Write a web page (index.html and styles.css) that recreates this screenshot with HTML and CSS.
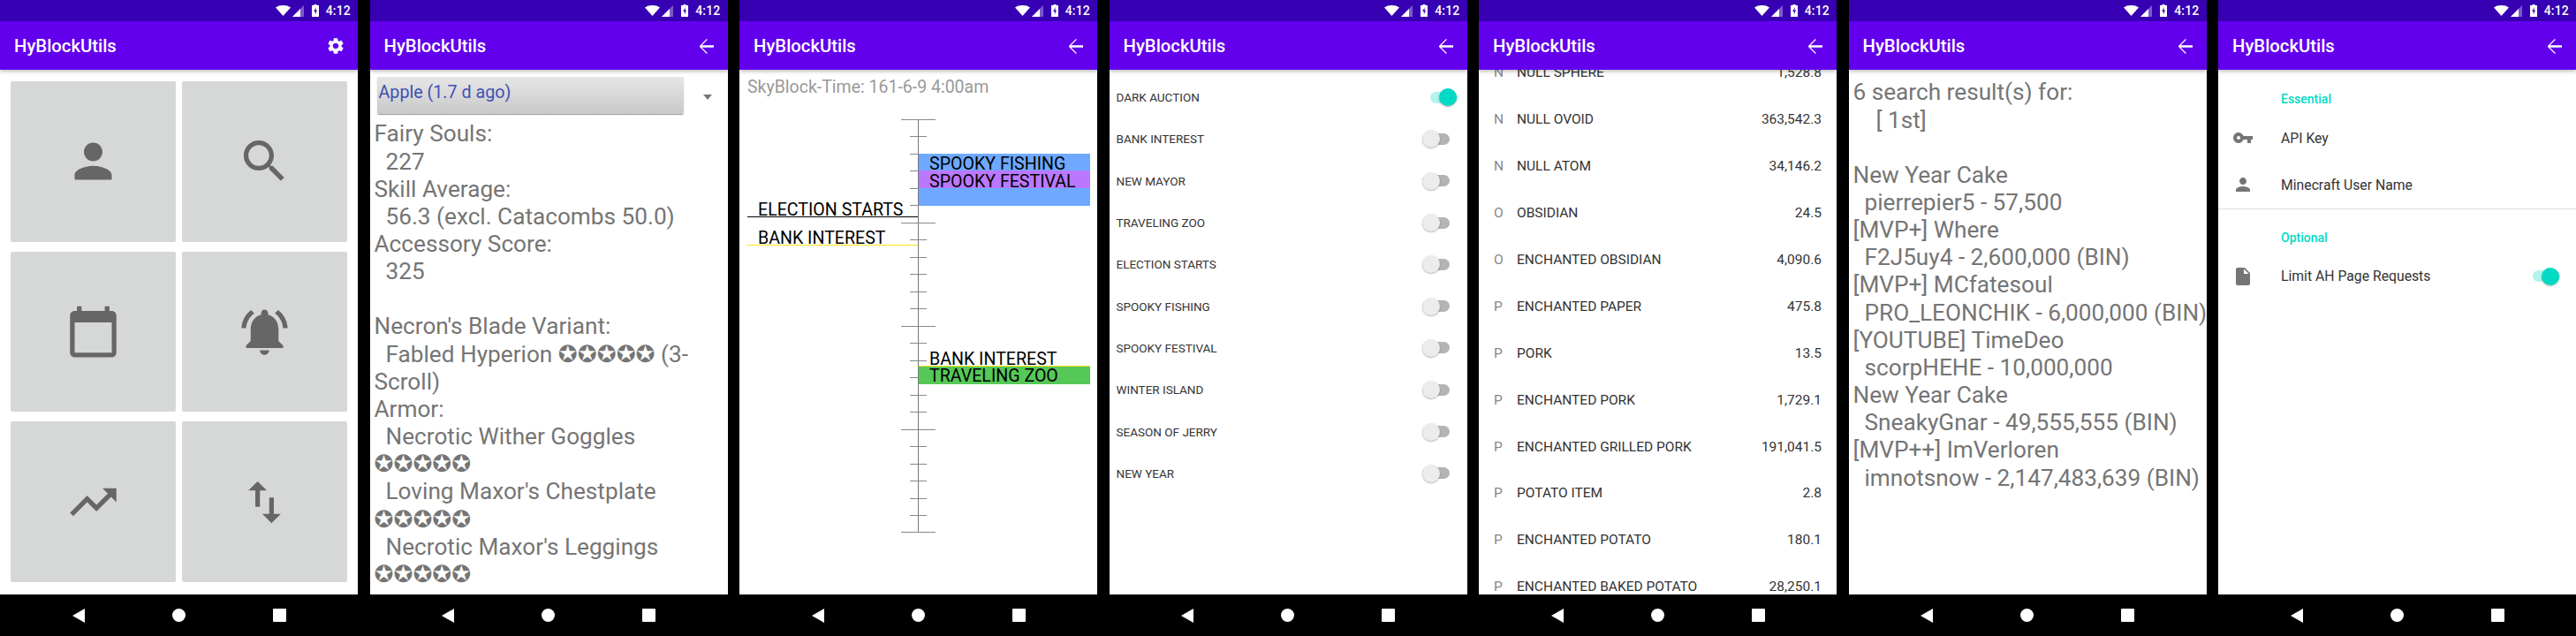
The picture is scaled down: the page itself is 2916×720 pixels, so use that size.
FILE: index.html
```html
<!DOCTYPE html>
<html lang="en">
<head>
    <meta charset="UTF-8">
    <title>HyBlockUtils</title>
    <link rel="stylesheet" href="styles.css">
</head>
<body>
    <svg class="icon-defs">
        <symbol id="wifi" viewBox="0 0 17 12"><path d="M8.5 12 0 2.5C2.2.8 5.2 0 8.5 0s6.300.8 8.500 2.500z"/></symbol>
        <symbol id="signal" viewBox="0 0 13 13"><path opacity=".35" d="M13 0v13H0z"/><path d="M9 4v9H0z"/></symbol>
        <symbol id="battery" viewBox="0 0 8 14"><path fill-rule="evenodd" d="M2.500 0h3v1H8v13H0V1h2.500zM4.700 3 2.300 8h1.500v3.500L6 6.500H4.400z"/></symbol>
        <symbol id="gear" viewBox="0 0 24 24"><path d="M19.140 12.940c.04-.3.06-.61.06-.94 0-.32-.02-.64-.07-.94l2.030-1.580c.18-.14.23-.41.12-.61l-1.920-3.320c-.12-.22-.37-.29-.59-.22l-2.390.96c-.5-.38-1.030-.7-1.620-.94l-.36-2.540c-.04-.24-.24-.41-.48-.41h-3.840c-.24 0-.43.17-.47.41l-.36 2.540c-.59.24-1.130.57-1.620.94l-2.390-.96c-.22-.08-.47 0-.59.22L2.740 8.870c-.12.21-.08.47.12.61l2.030 1.580c-.05.3-.09.63-.09.94s.02.64.07.94l-2.030 1.580c-.18.14-.23.41-.12.61l1.920 3.320c.12.22.37.29.59.22l2.390-.96c.5.38 1.030.7 1.620.94l.36 2.540c.05.24.24.41.48.41h3.840c.24 0 .44-.17.47-.41l.36-2.540c.59-.24 1.130-.56 1.620-.94l2.390.96c.22.08.47 0 .59-.22l1.920-3.320c.12-.22.07-.47-.12-.61l-2.010-1.580zM12 15.600c-1.980 0-3.600-1.620-3.600-3.600s1.620-3.600 3.600-3.600 3.600 1.620 3.600 3.600-1.620 3.600-3.600 3.600z"/></symbol>
        <symbol id="back" viewBox="0 0 24 24"><path d="M20 11.300H6.500l6.300-6.300-.8-1-8 8 .0 1 8 8 .8-1-6.300-6.300H20z"/></symbol>
        <symbol id="person" viewBox="0 0 24 24"><path d="M12 12c2.210 0 4-1.790 4-4s-1.790-4-4-4-4 1.790-4 4 1.790 4 4 4zm0 2c-2.670 0-8 1.340-8 4v2h16v-2c0-2.660-5.330-4-8-4z"/></symbol>
        <symbol id="search" viewBox="0 0 24 24"><path d="M15.500 14h-.79l-.28-.27C15.410 12.590 16 11.110 16 9.500 16 5.910 13.090 3 9.500 3S3 5.910 3 9.500 5.910 16 9.500 16c1.610 0 3.090-.59 4.230-1.570l.27.28v.79l5 4.990L20.490 19l-4.990-5zm-6 0C7.010 14 5 11.990 5 9.500S7.010 5 9.500 5 14 7.010 14 9.500 11.990 14 9.500 14z"/></symbol>
        <symbol id="calendar" viewBox="0 0 24 24"><path d="M20 3h-1V1h-2v2H7V1H5v2H4c-1.100 0-2 .9-2 2v16c0 1.100.9 2 2 2h16c1.100 0 2-.9 2-2V5c0-1.100-.9-2-2-2zm0 18H4V8h16v13z"/></symbol>
        <symbol id="alarm" viewBox="0 0 24 24"><path d="M7.580 4.080 6.150 2.650C3.750 4.480 2.170 7.300 2.030 10.500h2c.15-2.650 1.510-4.970 3.550-6.420zm12.390 6.420h2c-.15-3.200-1.730-6.020-4.120-7.850l-1.420 1.430c2.020 1.450 3.390 3.770 3.540 6.420zM18 11c0-3.070-1.640-5.640-4.500-6.320V4c0-.83-.67-1.500-1.500-1.500s-1.500.67-1.500 1.500v.68C7.630 5.360 6 7.920 6 11v5l-2 2v1h16v-1l-2-2v-5zm-6 11c.14 0 .27-.01.4-.04.65-.14 1.180-.58 1.440-1.180.1-.24.15-.5.15-.78h-4c.01 1.100.9 2 2.010 2z"/></symbol>
        <symbol id="trend" viewBox="0 0 24 24"><path d="m16 6 2.290 2.290-4.880 4.880-4-4L2 16.590 3.410 18l6-6 4 4 6.300-6.290L22 12V6z"/></symbol>
        <symbol id="swap" viewBox="0 0 24 24"><path d="M16 17.010V10h-2v7.010h-3L15 21l4-3.990h-3zM9 3 5 6.990h3V14h2V6.990h3L9 3z"/></symbol>
        <symbol id="key" viewBox="0 0 24 24"><path d="M12.650 10C11.830 7.670 9.610 6 7 6c-3.310 0-6 2.690-6 6s2.690 6 6 6c2.610 0 4.830-1.670 5.650-4H17v4h4v-4h2v-4H12.650zM7 14c-1.100 0-2-.9-2-2s.9-2 2-2 2 .9 2 2-.9 2-2 2z"/></symbol>
        <symbol id="file" viewBox="0 0 24 24"><path d="M6 2c-1.100 0-1.990.9-1.990 2L4 20c0 1.100.89 2 1.990 2H18c1.100 0 2-.9 2-2V8l-6-6H6zm7 7V3.500L18.500 9H13z"/></symbol>
    </svg>

    <main class="strip">
        <!-- home -->
        <section class="phone">
            <div class="status-bar"><svg class="st-wifi"><use href="#wifi"/></svg><svg class="st-signal"><use href="#signal"/></svg><svg class="st-battery"><use href="#battery"/></svg><span class="st-time">4:12</span></div>
            <header class="app-bar"><span class="app-title">HyBlockUtils</span><svg class="bar-icon gear-icon"><use href="#gear"/></svg></header>
            <div class="content tile-grid">
                <div class="tile"><svg class="tile-icon"><use href="#person"/></svg></div>
                <div class="tile"><svg class="tile-icon"><use href="#search"/></svg></div>
                <div class="tile"><svg class="tile-icon"><use href="#calendar"/></svg></div>
                <div class="tile"><svg class="tile-icon"><use href="#alarm"/></svg></div>
                <div class="tile"><svg class="tile-icon"><use href="#trend"/></svg></div>
                <div class="tile"><svg class="tile-icon"><use href="#swap"/></svg></div>
            </div>
            <nav class="nav-bar"><i class="nav-back"></i><i class="nav-home"></i><i class="nav-recent"></i></nav>
        </section>

        <!-- player stats -->
        <section class="phone">
            <div class="status-bar"><svg class="st-wifi"><use href="#wifi"/></svg><svg class="st-signal"><use href="#signal"/></svg><svg class="st-battery"><use href="#battery"/></svg><span class="st-time">4:12</span></div>
            <header class="app-bar"><span class="app-title">HyBlockUtils</span><svg class="bar-icon"><use href="#back"/></svg></header>
            <div class="content">
                <div class="spinner"><div class="spinner-button">Apple (1.7 d ago)</div><i class="spinner-arrow"></i></div>
                <div class="big-text">Fairy Souls:
  227
Skill Average:
  56.3 (excl. Catacombs 50.0)
Accessory Score:
  325

Necron's Blade Variant:
  Fabled Hyperion ✪✪✪✪✪ (3-Scroll)
Armor:
  Necrotic Wither Goggles ✪✪✪✪✪
  Loving Maxor's Chestplate ✪✪✪✪✪
  Necrotic Maxor's Leggings ✪✪✪✪✪</div>
            </div>
            <nav class="nav-bar"><i class="nav-back"></i><i class="nav-home"></i><i class="nav-recent"></i></nav>
        </section>

        <!-- event timeline -->
        <section class="phone">
            <div class="status-bar"><svg class="st-wifi"><use href="#wifi"/></svg><svg class="st-signal"><use href="#signal"/></svg><svg class="st-battery"><use href="#battery"/></svg><span class="st-time">4:12</span></div>
            <header class="app-bar"><span class="app-title">HyBlockUtils</span><svg class="bar-icon"><use href="#back"/></svg></header>
            <div class="content">
                <div class="sky-time">SkyBlock-Time: 161-6-9 4:00am</div>
                <div class="timeline">
                    <div class="axis-line"></div>
                    <div class="axis-minor"></div>
                    <div class="axis-major"></div>
                    <div class="band band-blue"></div>
                    <div class="band band-purple"></div>
                    <div class="band band-green"></div>
                    <div class="mark mark-left mark-black"></div>
                    <div class="mark mark-left mark-yellow"></div>
                    <div class="mark mark-right mark-yellow"></div>
                    <span class="ev ev-fishing">SPOOKY FISHING</span>
                    <span class="ev ev-festival">SPOOKY FESTIVAL</span>
                    <span class="ev ev-election">ELECTION STARTS</span>
                    <span class="ev ev-bank-l">BANK INTEREST</span>
                    <span class="ev ev-bank-r">BANK INTEREST</span>
                    <span class="ev ev-zoo">TRAVELING ZOO</span>
                </div>
            </div>
            <nav class="nav-bar"><i class="nav-back"></i><i class="nav-home"></i><i class="nav-recent"></i></nav>
        </section>

        <!-- notifications -->
        <section class="phone">
            <div class="status-bar"><svg class="st-wifi"><use href="#wifi"/></svg><svg class="st-signal"><use href="#signal"/></svg><svg class="st-battery"><use href="#battery"/></svg><span class="st-time">4:12</span></div>
            <header class="app-bar"><span class="app-title">HyBlockUtils</span><svg class="bar-icon"><use href="#back"/></svg></header>
            <div class="content switch-list">
                <div class="switch-row"><span>DARK AUCTION</span><i class="switch on"></i></div>
                <div class="switch-row"><span>BANK INTEREST</span><i class="switch"></i></div>
                <div class="switch-row"><span>NEW MAYOR</span><i class="switch"></i></div>
                <div class="switch-row"><span>TRAVELING ZOO</span><i class="switch"></i></div>
                <div class="switch-row"><span>ELECTION STARTS</span><i class="switch"></i></div>
                <div class="switch-row"><span>SPOOKY FISHING</span><i class="switch"></i></div>
                <div class="switch-row"><span>SPOOKY FESTIVAL</span><i class="switch"></i></div>
                <div class="switch-row"><span>WINTER ISLAND</span><i class="switch"></i></div>
                <div class="switch-row"><span>SEASON OF JERRY</span><i class="switch"></i></div>
                <div class="switch-row"><span>NEW YEAR</span><i class="switch"></i></div>
            </div>
            <nav class="nav-bar"><i class="nav-back"></i><i class="nav-home"></i><i class="nav-recent"></i></nav>
        </section>

        <!-- prices -->
        <section class="phone">
            <div class="status-bar"><svg class="st-wifi"><use href="#wifi"/></svg><svg class="st-signal"><use href="#signal"/></svg><svg class="st-battery"><use href="#battery"/></svg><span class="st-time">4:12</span></div>
            <header class="app-bar"><span class="app-title">HyBlockUtils</span><svg class="bar-icon"><use href="#back"/></svg></header>
            <div class="content">
                <div class="price-list">
                    <div class="price-row"><b>N</b><span>NULL SPHERE</span><em>1,528.8</em></div>
                    <div class="price-row"><b>N</b><span>NULL OVOID</span><em>363,542.3</em></div>
                    <div class="price-row"><b>N</b><span>NULL ATOM</span><em>34,146.2</em></div>
                    <div class="price-row"><b>O</b><span>OBSIDIAN</span><em>24.5</em></div>
                    <div class="price-row"><b>O</b><span>ENCHANTED OBSIDIAN</span><em>4,090.6</em></div>
                    <div class="price-row"><b>P</b><span>ENCHANTED PAPER</span><em>475.8</em></div>
                    <div class="price-row"><b>P</b><span>PORK</span><em>13.5</em></div>
                    <div class="price-row"><b>P</b><span>ENCHANTED PORK</span><em>1,729.1</em></div>
                    <div class="price-row"><b>P</b><span>ENCHANTED GRILLED PORK</span><em>191,041.5</em></div>
                    <div class="price-row"><b>P</b><span>POTATO ITEM</span><em>2.8</em></div>
                    <div class="price-row"><b>P</b><span>ENCHANTED POTATO</span><em>180.1</em></div>
                    <div class="price-row"><b>P</b><span>ENCHANTED BAKED POTATO</span><em>28,250.1</em></div>
                </div>
            </div>
            <nav class="nav-bar"><i class="nav-back"></i><i class="nav-home"></i><i class="nav-recent"></i></nav>
        </section>

        <!-- auction search -->
        <section class="phone">
            <div class="status-bar"><svg class="st-wifi"><use href="#wifi"/></svg><svg class="st-signal"><use href="#signal"/></svg><svg class="st-battery"><use href="#battery"/></svg><span class="st-time">4:12</span></div>
            <header class="app-bar"><span class="app-title">HyBlockUtils</span><svg class="bar-icon"><use href="#back"/></svg></header>
            <div class="content">
                <div class="big-text search-text">6 search result(s) for:
    [ 1st]

New Year Cake
  pierrepier5 - 57,500
[MVP+] Where
  F2J5uy4 - 2,600,000 (BIN)
[MVP+] MCfatesoul
  PRO_LEONCHIK - 6,000,000 (BIN)
[YOUTUBE] TimeDeo
  scorpHEHE - 10,000,000
New Year Cake
  SneakyGnar - 49,555,555 (BIN)
[MVP++] ImVerloren
  imnotsnow - 2,147,483,639 (BIN)</div>
            </div>
            <nav class="nav-bar"><i class="nav-back"></i><i class="nav-home"></i><i class="nav-recent"></i></nav>
        </section>

        <!-- settings -->
        <section class="phone">
            <div class="status-bar"><svg class="st-wifi"><use href="#wifi"/></svg><svg class="st-signal"><use href="#signal"/></svg><svg class="st-battery"><use href="#battery"/></svg><span class="st-time">4:12</span></div>
            <header class="app-bar"><span class="app-title">HyBlockUtils</span><svg class="bar-icon"><use href="#back"/></svg></header>
            <div class="content">
                <div class="pref-group">
                    <h3 class="pref-head">Essential</h3>
                    <div class="pref-row"><svg class="pref-icon"><use href="#key"/></svg><span>API Key</span></div>
                    <div class="pref-row"><svg class="pref-icon"><use href="#person"/></svg><span>Minecraft User Name</span></div>
                </div>
                <div class="pref-group">
                    <h3 class="pref-head">Optional</h3>
                    <div class="pref-row"><svg class="pref-icon"><use href="#file"/></svg><span>Limit AH Page Requests</span><i class="switch on pref-switch"></i></div>
                </div>
            </div>
            <nav class="nav-bar"><i class="nav-back"></i><i class="nav-home"></i><i class="nav-recent"></i></nav>
        </section>
    </main>
</body>
</html>
```
FILE: styles.css
```css
* { box-sizing: border-box; }
body {
    margin: 0;
    background-color: #000;
    font-family: Roboto, "DejaVu Sans", sans-serif;
}
.icon-defs { display: none; }
.strip {
    display: flex;
    justify-content: space-between;
    width: 2916px;
    height: 720px;
    overflow: hidden;
}
.phone {
    display: flex;
    flex-direction: column;
    width: 405px;
    height: 720px;
    background-color: #fff;
}

/* status bar */
.status-bar {
    display: flex;
    align-items: center;
    justify-content: flex-end;
    flex: none;
    height: 24px;
    padding-right: 8px;
    background-color: #3700b3;
    color: #fff;
    fill: #fff;
}
.st-wifi { width: 17px; height: 12px; margin-right: 2px; }
.st-signal { width: 13px; height: 13px; margin-right: 9px; }
.st-battery { width: 8px; height: 14px; margin-right: 8px; }
.st-time { font-size: 14px; font-weight: 500; letter-spacing: .2px; }

/* app bar */
.app-bar {
    position: relative;
    z-index: 2;
    display: flex;
    align-items: center;
    justify-content: space-between;
    flex: none;
    height: 55px;
    padding: 0 12px 0 16px;
    background-color: #6200ee;
    box-shadow: 0 2px 4px rgba(0, 0, 0, 0.25);
    color: #fff;
}
.app-title { font-size: 20.3px; font-weight: 500; }
.bar-icon { width: 24px; height: 24px; fill: #fff; }
.gear-icon { width: 22px; height: 22px; margin-right: 2px; }

.content {
    flex: 1;
    min-height: 0;
    overflow: hidden;
}

/* nav bar */
.nav-bar {
    display: flex;
    align-items: center;
    justify-content: center;
    gap: 99px;
    flex: none;
    height: 47px;
    background-color: #000;
}
.nav-back {
    width: 0;
    height: 0;
    border-style: solid;
    border-width: 8px 14px 8px 0;
    border-color: transparent #fff transparent transparent;
}
.nav-home { width: 15px; height: 15px; border-radius: 50%; background-color: #fff; }
.nav-recent { width: 15px; height: 15px; border-radius: 1px; background-color: #fff; }

/* home tiles */
.tile-grid {
    display: grid;
    grid-template-columns: 187px 187px;
    grid-template-rows: repeat(3, 1fr);
    gap: 11px 7px;
    padding: 13px 12px 14px;
}
.tile {
    display: flex;
    align-items: center;
    justify-content: center;
    background-color: #d6d8d7;
    border-radius: 2px;
}
.tile-icon { width: 63px; height: 63px; fill: #666; }

/* long gray text screens */
.big-text {
    padding: 0 0 0 5px;
    font-size: 26.2px;
    line-height: 31.15px;
    color: #757575;
    white-space: pre-wrap;
}
.search-text { padding-top: 10.4px; white-space: pre; }

.spinner {
    display: flex;
    align-items: flex-start;
    height: 57.4px;
    padding: 8px 18px 0 8px;
}
.spinner-button {
    width: 347px;
    height: 42px;
    padding: 5px 2px;
    border-radius: 2px;
    background: linear-gradient(#e6e6e6, #c9c9c9);
    box-shadow: 0 1px 1px rgba(0, 0, 0, 0.4);
    font-size: 19.7px;
    line-height: 26px;
    color: #3f51b5;
}
.spinner-arrow {
    margin-left: 22px;
    margin-top: 20px;
    width: 0;
    height: 0;
    border-style: solid;
    border-width: 6px 5px 0;
    border-color: #777 transparent transparent;
}

/* timeline */
.sky-time {
    height: 56px;
    padding: 9px 0 0 9px;
    font-size: 19.5px;
    line-height: 22px;
    color: #999;
}
.timeline { position: relative; height: 480px; }
.axis-line {
    position: absolute;
    left: 202px;
    top: 0;
    width: 1px;
    height: 468px;
    background-color: #777;
}
.axis-minor {
    position: absolute;
    left: 193px;
    top: 0;
    width: 19px;
    height: 468px;
    background: repeating-linear-gradient(to bottom, #888 0, #888 1px, transparent 1px, transparent 19.48px);
}
.axis-major {
    position: absolute;
    left: 183px;
    top: 0;
    width: 39px;
    height: 468px;
    background: repeating-linear-gradient(to bottom, #888 0, #888 1px, transparent 1px, transparent 116.875px);
}
.band { position: absolute; left: 203px; width: 194px; }
.band-blue { top: 39px; height: 59px; background-color: #6ea9ff; }
.band-purple { top: 58px; height: 20px; background-color: #bb78ff; }
.band-green { top: 279px; height: 21px; background-color: #56c858; }
.mark { position: absolute; height: 1px; }
.mark-left { left: 9px; width: 193px; }
.mark-right { left: 203px; width: 194px; top: 279px; }
.mark-black { top: 110px; background-color: #000; }
.mark-yellow { background-color: #ffe01a; }
.mark-left.mark-yellow { top: 142px; }
.ev {
    position: absolute;
    font-size: 19.6px;
    line-height: 20px;
    color: #000;
    white-space: nowrap;
}
.ev-fishing { left: 215px; top: 41px; }
.ev-festival { left: 215px; top: 61px; }
.ev-election { left: 21px; top: 93px; }
.ev-bank-l { left: 21px; top: 125px; }
.ev-bank-r { left: 215px; top: 262px; }
.ev-zoo { left: 215px; top: 281px; }

/* switches */
.switch-list { padding-top: 7.5px; }
.switch-row {
    display: flex;
    align-items: center;
    justify-content: space-between;
    height: 47.3px;
    padding: 0 20px 0 8px;
    font-size: 13.5px;
    color: #333;
}
.switch {
    position: relative;
    display: block;
    width: 31px;
    height: 13px;
    border-radius: 7px;
    background-color: #b4b4b4;
}
.switch::after {
    content: "";
    position: absolute;
    left: 0;
    top: -3.5px;
    width: 20px;
    height: 20px;
    border-radius: 50%;
    background-color: #ececec;
    box-shadow: 0 1px 2px rgba(0, 0, 0, 0.3);
}
.switch.on { margin-right: -9px; background-color: #b2f3ec; }
.switch.on::after { left: 10px; background-color: #03dac5; }
.switch.on.pref-switch { margin-right: 18px; }

/* price list */
.price-list { margin-top: -23px; }
.price-row {
    display: flex;
    align-items: center;
    height: 52.9px;
    padding: 0 17px;
    font-size: 15.5px;
    color: #333;
}
.price-row b { width: 26px; font-weight: 400; color: #888; }
.price-row span { flex: 1; }
.price-row em { font-style: normal; }

/* settings */
.pref-group { padding-top: 23px; border-bottom: 1px solid #e0e0e0; }
.pref-group:last-child { padding-top: 22px; border-bottom: none; }
.pref-head {
    margin: 0;
    padding-left: 71px;
    height: 28px;
    font-size: 14px;
    font-weight: 500;
    line-height: 21px;
    color: #03dac5;
}
.pref-row {
    display: flex;
    align-items: center;
    height: 52.8px;
    padding-left: 16px;
    font-size: 15.75px;
    color: #333;
}
.pref-icon { width: 24px; height: 24px; margin-right: 31px; fill: #757575; }
.pref-row span { flex: 1; }
```
